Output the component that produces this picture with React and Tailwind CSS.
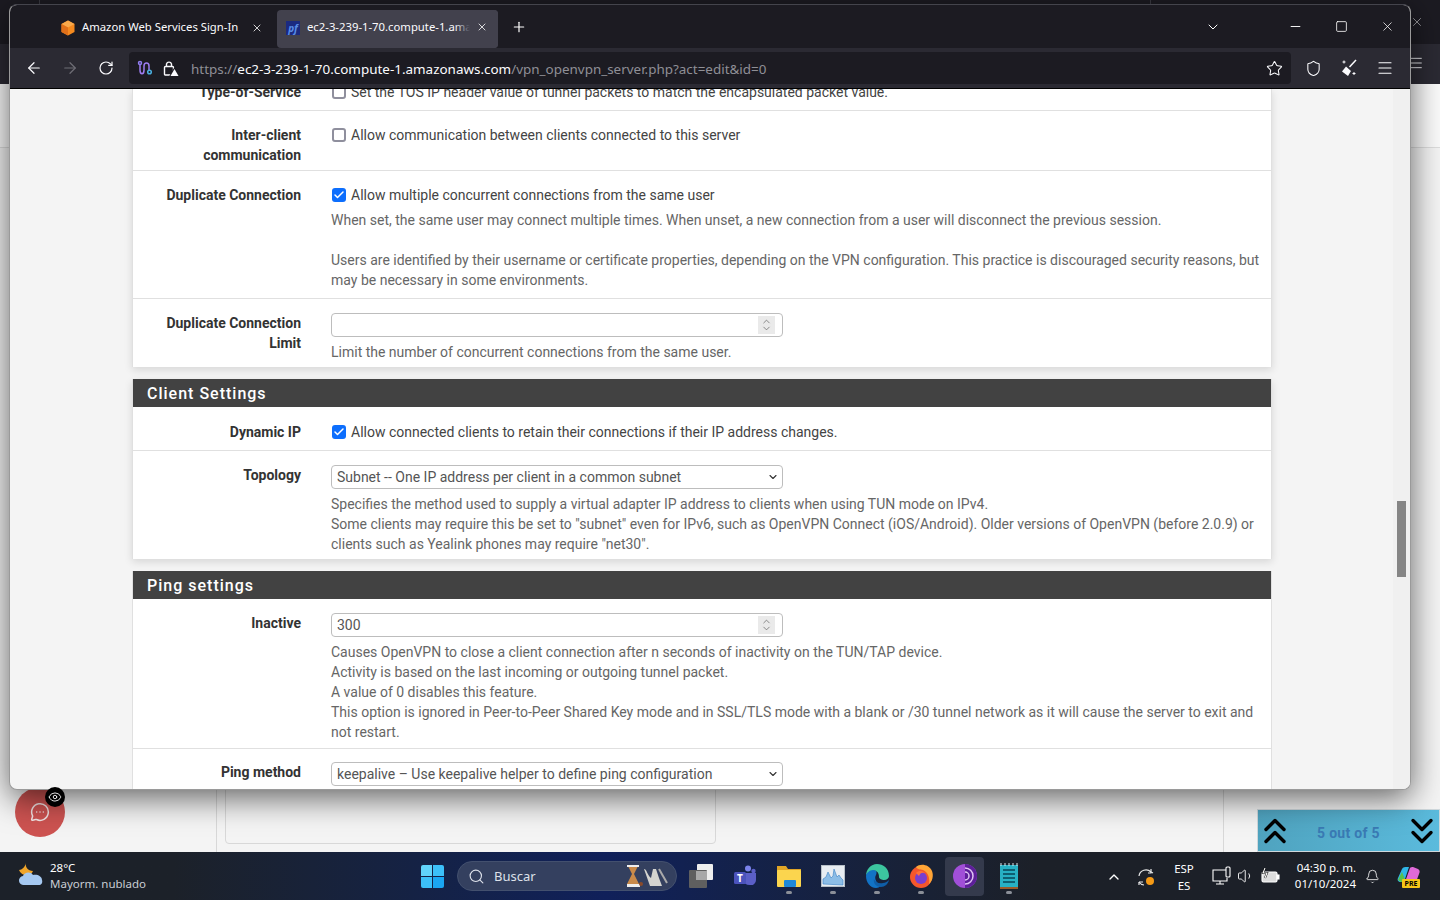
import React from "react";
import { X, Plus, ChevronDown, ArrowLeft, ArrowRight, RotateCw, Star, Shield, Menu, Minus, Square, Search, ChevronUp, Bell, Volume1, MessageCircleMore, Eye, Check } from "lucide-react";

const ui = "font-['Noto_Sans',sans-serif]";

function Cb({ on }) {
  return on ? (
    <span className="mt-[3px] ml-[1px] w-[14px] h-[14px] rounded-[3px] bg-[#0d6efd] flex items-center justify-center shrink-0">
      <Check size={12} color="#fff" strokeWidth={3} />
    </span>
  ) : (
    <span className="mt-[3px] ml-[1px] w-[14px] h-[14px] rounded-[3px] border-2 border-[#8f8f9d] bg-white shrink-0" />
  );
}

function Row({ label, children, cls = "" }) {
  return (
    <div className={`flex border-b border-[#e0e0e0] ${cls}`}>
      <div className="w-[168px] shrink-0 text-right font-bold text-[#333] text-[14px] leading-[20px]">{label}</div>
      <div className="flex-1 pl-[30px] pr-[10px] min-w-0">{children}</div>
    </div>
  );
}

function Help({ children }) {
  return <div className="text-[#666] text-[14px] leading-[20px]">{children}</div>;
}

function NumInput({ value }) {
  return (
    <div className="w-[452px] h-[24px] border border-[#bdbdbd] rounded-[4px] bg-white flex items-center pl-[5px] pr-[7px] text-[14px] text-[#555]">
      <span className="flex-1">{value}</span>
      <span className="w-[17px] h-[18px] bg-[#eaeaea] flex flex-col items-center justify-center text-[#666]">
        <ChevronUp size={11} strokeWidth={1.6} className="-mb-[2px]" />
        <ChevronDown size={11} strokeWidth={1.6} className="-mt-[2px]" />
      </span>
    </div>
  );
}

function Sel({ value }) {
  return (
    <div className="w-[452px] h-[24px] border border-[#bdbdbd] rounded-[4px] bg-white flex items-center pl-[5px] pr-[3px] text-[14px] text-[#555]">
      <span className="flex-1">{value}</span>
      <ChevronDown size={12} strokeWidth={2.2} className="text-[#333]" />
    </div>
  );
}

function Head({ children }) {
  return (
    <div className="h-[28px] pt-[2px] bg-[#424242] text-white text-[16px] font-medium tracking-[1px] flex items-center pl-[14px]">{children}</div>
  );
}

function Dot() {
  return <span className="absolute left-1/2 -translate-x-1/2 top-[37px] w-[6px] h-[3px] rounded-full bg-[#8b8f98]" />;
}

function TaskIcon({ children, dot, active }) {
  return (
    <div className="relative w-[44px] h-[44px] flex items-center justify-center">
      {active && <span className="absolute left-[2px] right-[3px] top-[3px] bottom-[2px] bg-[#343a4c] rounded-[4px]" />}
      <span className="relative flex items-center justify-center">{children}</span>
      {dot && <Dot />}
    </div>
  );
}

function Chevrons({ down }) {
  return (
    <svg width="24" height="26" viewBox="0 0 24 26" fill="none" stroke="#000" strokeWidth="3.4" strokeLinecap="round" strokeLinejoin="round" className={down ? "rotate-180" : ""}>
      <path d="M3 11.5 12 2.5l9 9" />
      <path d="M3 23.5 12 14.5l9 9" />
    </svg>
  );
}

function Browser() {
  return (
    <div className="absolute left-[9px] top-[4px] w-[1402px] h-[786px] rounded-[8px] overflow-hidden border border-[#9a9a9a] border-t-[#44444c] shadow-[0_8px_32px_rgba(0,0,0,0.6)] flex flex-col bg-[#f4f4f4]">
      {/* tab strip */}
      <div className={`h-[43px] bg-[#1c1b22] flex items-center shrink-0 text-white ${ui}`}>
        <div className="w-[267px] h-[38px] mt-[5px] flex items-center pl-[50px] shrink-0">
          <svg width="16" height="16" viewBox="0 0 16 16" className="shrink-0 mb-[3px]">
            <path d="M8 0.5 14.5 4v8L8 15.5 1.5 12V4z" fill="#f58a1f" />
            <path d="M8 0.5 14.5 4 8 7.5 1.5 4z" fill="#f9a94b" />
            <path d="M8 7.5v8L1.5 12V4z" fill="#e0701a" />
          </svg>
          <span className="ml-[6px] mb-[3px] text-[11.3px] whitespace-nowrap text-[#fbfbfe]">Amazon Web Services Sign-In</span>
          <X size={12} className="absolute left-[241px] mb-[3px]" strokeWidth={1.6} />
        </div>
        <div className="relative w-[221px] h-[38px] mt-[5px] rounded-[4px] bg-[#42414d] flex items-center pl-[9px] shrink-0">
          <span className="w-[14px] h-[14px] mb-[3px] bg-[#1b2a80] text-[#5a8fe8] text-[10px] italic font-bold leading-[14px] text-center shrink-0">pf</span>
          <span className="ml-[7px] mb-[3px] text-[11.3px] whitespace-nowrap w-[166px] overflow-hidden text-[#fbfbfe]">ec2-3-239-1-70.compute-1.amazonaws.com</span>
          <span className="absolute left-[178px] top-0 h-full w-[43px] rounded-r-[4px] bg-gradient-to-r from-[#42414d00] from-0% to-[#42414d] to-[35%]" />
          <X size={12} className="absolute right-[10px] top-[11px]" strokeWidth={1.6} />
        </div>
        <Plus size={16} className="ml-[13px]" strokeWidth={1.8} />
        <div className="flex-1" />
        <ChevronDown size={16} className="mr-[67px]" strokeWidth={1.5} />
        <Minus size={15} className="mr-[32px]" strokeWidth={1.5} />
        <Square size={13} className="mr-[32px]" strokeWidth={1.5} />
        <X size={15} className="mr-[15px]" strokeWidth={1.2} />
      </div>
      {/* toolbar */}
      <div className={`h-[41px] bg-[#2b2a33] flex items-center text-[#fbfbfe] shrink-0 border-b border-black ${ui}`}>
        <ArrowLeft size={18} className="ml-[15px]" strokeWidth={1.6} />
        <ArrowRight size={18} className="ml-[18px] text-[#6f6e76]" strokeWidth={1.6} />
        <RotateCw size={16} className="ml-[19px]" strokeWidth={1.8} />
        <div className="ml-[15px] w-[1162px] h-[32px] rounded-[4px] bg-[#1c1b22] flex items-center pl-[8px] pr-[8px]">
          <svg width="16" height="16" viewBox="0 0 16 16" fill="none" strokeWidth="1.5" className="shrink-0">
            <path d="M3 4v6c0 5 4 5 4 0V6c0-4 5-4 5 0v4" stroke="#9d7cf0" />
            <circle cx="3" cy="3" r="1.5" stroke="#8f7cf0" />
            <circle cx="12.5" cy="12" r="1.8" stroke="#4ab0e0" />
          </svg>
          <svg width="18" height="18" viewBox="0 0 18 18" fill="none" className="ml-[9px] shrink-0">
            <rect x="2.5" y="7.5" width="9" height="8.5" rx="1" stroke="#fbfbfe" strokeWidth="1.4" />
            <path d="M4.5 7.5V5a2.6 2.6 0 0 1 5 0v2.5" stroke="#fbfbfe" strokeWidth="1.4" />
            <path d="M12.5 8 18 17.5H7z" fill="#1c1b22" />
            <path d="M12.5 10 16.5 17h-8z" fill="#fbfbfe" />
          </svg>
          <span className="ml-[11px] mt-[2px] text-[13.44px] whitespace-nowrap text-[#8f8f96]">https://<span className="text-[#fbfbfe]">ec2-3-239-1-70.compute-1.amazonaws.com</span>/vpn_openvpn_server.php?act=edit&amp;id=0</span>
          <div className="flex-1" />
          <Star size={17} strokeWidth={1.5} />
        </div>
        <Shield size={17} className="ml-[14px]" strokeWidth={1.5} />
        <svg width="18" height="18" viewBox="0 0 18 18" className="ml-[18px]" fill="none">
          <path d="M16 1 9.5 8" stroke="#fbfbfe" strokeWidth="1.5" />
          <path d="M6 7.5l5 4.5-3 5-6-4.5z" fill="#fbfbfe" />
          <path d="M4 1.5v3M2.5 3h3M14 13v3M12.5 14.5h3" stroke="#fbfbfe" />
        </svg>
        <Menu size={18} className="ml-[18px]" strokeWidth={1.5} />
      </div>
      {/* page */}
      <div className="relative flex-1 min-h-0 overflow-hidden pl-[122px] font-['Roboto',sans-serif]">
        <div className="w-[1140px]">
          <div className="bg-white border-x border-[#e0e0e0] shadow-[0_3px_8px_rgba(0,0,0,0.12)]">
            <Row label={<div className="mt-[-7px]">Type-of-Service</div>} cls="h-[22px] overflow-hidden">
              <div className="flex gap-[5px] mt-[-7px] text-[#444] text-[14px] leading-[20px]"><Cb /><span>Set the TOS IP header value of tunnel packets to match the encapsulated packet value.</span></div>
            </Row>
            <Row label={<div className="pt-[14px]">Inter-client<br />communication</div>} cls="h-[60px]">
              <div className="flex gap-[5px] pt-[14px] text-[#444] text-[14px] leading-[20px]"><Cb /><span>Allow communication between clients connected to this server</span></div>
            </Row>
            <Row label={<div className="pt-[14px]">Duplicate Connection</div>} cls="h-[128px]">
              <div className="flex gap-[5px] pt-[14px] text-[#444] text-[14px] leading-[20px] mb-[5px]"><Cb on /><span>Allow multiple concurrent connections from the same user</span></div>
              <Help>When set, the same user may connect multiple times. When unset, a new connection from a user will disconnect the previous session.<br /><br /></Help>
              <Help>Users are identified by their username or certificate properties, depending on the VPN configuration. This practice is discouraged security reasons, but may be necessary in some environments.</Help>
            </Row>
            <Row label={<div className="pt-[14px]">Duplicate Connection<br />Limit</div>} cls="h-[68px] border-b-0">
              <div className="pt-[14px]"><NumInput /></div>
              <div className="mt-[5px]"><Help>Limit the number of concurrent connections from the same user.</Help></div>
            </Row>
          </div>

          <div className="mt-[12px] bg-white border-x border-[#e0e0e0] shadow-[0_3px_8px_rgba(0,0,0,0.12)]">
            <Head>Client Settings</Head>
            <Row label={<div className="pt-[15px]">Dynamic IP</div>} cls="h-[44px]">
              <div className="flex gap-[5px] pt-[15px] text-[#444] text-[14px] leading-[20px]"><Cb on /><span>Allow connected clients to retain their connections if their IP address changes.</span></div>
            </Row>
            <Row label={<div className="pt-[14px]">Topology</div>} cls="h-[108px] border-b-0">
              <div className="pt-[14px]"><Sel value="Subnet -- One IP address per client in a common subnet" /></div>
              <div className="mt-[5px]">
                <Help>Specifies the method used to supply a virtual adapter IP address to clients when using TUN mode on IPv4.<br />Some clients may require this be set to "subnet" even for IPv6, such as OpenVPN Connect (iOS/Android). Older versions of OpenVPN (before 2.0.9) or clients such as Yealink phones may require "net30".</Help>
              </div>
            </Row>
          </div>

          <div className="mt-[12px] bg-white border-x border-[#e0e0e0]">
            <Head>Ping settings</Head>
            <Row label={<div className="pt-[14px]">Inactive</div>} cls="h-[150px]">
              <div className="pt-[14px]"><NumInput value="300" /></div>
              <div className="mt-[5px]">
                <Help>Causes OpenVPN to close a client connection after n seconds of inactivity on the TUN/TAP device.<br />Activity is based on the last incoming or outgoing tunnel packet.<br />A value of 0 disables this feature.<br />This option is ignored in Peer-to-Peer Shared Key mode and in SSL/TLS mode with a blank or /30 tunnel network as it will cause the server to exit and not restart.</Help>
              </div>
            </Row>
            <Row label={<div className="pt-[13px]">Ping method</div>} cls="h-[60px] border-b-0">
              <div className="pt-[13px]"><Sel value="keepalive – Use keepalive helper to define ping configuration" /></div>
            </Row>
          </div>
        </div>
        {/* scrollbar */}
        <div className="absolute right-0 top-0 bottom-0 w-[17px] bg-[#f0f0f0]">
          <div className="absolute left-[4px] top-[412px] w-[9px] h-[76px] bg-[#858585]" />
        </div>
      </div>
    </div>
  );
}

function BackDesktop() {
  return (
    <>
      <div className="absolute inset-x-0 top-0 h-[44px] bg-[#1c1b22]" />
      <div className="absolute left-[39px] top-0 w-px h-[44px] bg-[#3a3a42]" />
      <div className="absolute left-[1150px] top-0 w-px h-[44px] bg-[#3a3a42]" />
      <div className="absolute inset-x-0 top-[44px] h-[40px] bg-[#2b2a33]" />
      <X size={14} className="absolute left-[1410px] top-[15px] text-[#c8c8cc]" strokeWidth={1.2} />
      <Menu size={16} className="absolute left-[1408px] top-[55px] text-[#e6e6ea]" strokeWidth={1.5} />
      <div className="absolute left-0 right-0 top-[84px] h-[64px] bg-[#fafafa] border-b border-[#dddddd]" />
      <div className="absolute left-[216px] top-[789px] h-[64px] w-px bg-[#d8d8d8]" />
      <div className="absolute left-[1223px] top-[789px] h-[64px] w-px bg-[#d8d8d8]" />
      <div className="absolute left-[225px] top-[780px] w-[491px] h-[64px] rounded-[4px] border border-[#d8d8d8]" />
    </>
  );
}

function Taskbar() {
  return (
    <div className={`absolute inset-x-0 bottom-0 h-[48px] bg-gradient-to-r from-[#1c2129] from-[12%] via-[#10205a] via-[42%] to-[#1c2028] to-[72%] flex items-center text-white ${ui}`}>
      {/* weather */}
      <svg width="28" height="28" viewBox="0 0 28 28" className="absolute left-[17px] top-[9px]">
        <path d="M9 2c-1 4 2 8 7 8-1 3-4 4-7 4-4 0-6-3-7-5 3 0 6-3 7-7z" fill="#f0a52a" />
        <path d="M7 24a4.5 4.5 0 0 1-1-9c1-4 8-5 10-1 4-1 9 1 9 5 1 3-1 5-3 5z" fill="#a5c8f0" />
      </svg>
      <div className="absolute left-[50px] top-[8px] text-[11.5px] leading-[16px] whitespace-nowrap">
        <div>28°C</div>
        <div className="text-[#c9cdd4]">Mayorm. nublado</div>
      </div>

      {/* center */}
      <div className="absolute left-[421px] top-[13px] grid grid-cols-2 gap-[1px] w-[23px] h-[23px]">
        <span className="bg-[#61d4fb] rounded-tl-[2px]" /><span className="bg-[#3cc0f8] rounded-tr-[2px]" />
        <span className="bg-[#3cc0f8] rounded-bl-[2px]" /><span className="bg-[#1aa6f2] rounded-br-[2px]" />
      </div>
      <div className="absolute left-[457px] top-[9px] w-[220px] h-[30px] rounded-full bg-[#34405f] border border-[#43506e] flex items-center pl-[10px] text-[#dde1ea] text-[13px]">
        <Search size={17} strokeWidth={1.6} />
        <span className="ml-[9px] mt-[1px]">Buscar</span>
        <svg width="44" height="26" viewBox="0 0 44 26" className="absolute left-[168px] top-[1px]">
          <path d="M2 3h10l-4 8 5 10H1l5-10z" fill="#c98a4a" />
          <path d="M1 2h12v2H1zM1 21h13v3H1z" fill="#eee" />
          <circle cx="15" cy="21" r="2" fill="#8a4a2a" />
          <path d="M18 6c3 0 3 6 7 9l2-9h3l3 9 3 8H24z" fill="#d4d4d0" />
          <path d="M33 6l8 14" stroke="#aaa" strokeWidth="2" />
        </svg>
      </div>
      <div className="absolute left-[679px] top-[2px] flex items-center">
        <TaskIcon>
          <span className="relative block w-[24px] h-[24px]">
            <span className="absolute right-0 top-0 w-[16px] h-[16px] bg-[#eeeeee] rounded-[1px]" />
            <span className="absolute left-0 bottom-0 w-[18px] h-[18px] bg-[#5f5f5f] rounded-[1px]" />
            <span className="absolute left-[7px] top-[7px] w-[11px] h-[9px] bg-[#a8a8a8]" />
          </span>
        </TaskIcon>
        <TaskIcon>
          <svg width="24" height="24" viewBox="0 0 24 24">
            <circle cx="15" cy="4.5" r="3" fill="#7b83eb" />
            <circle cx="20.5" cy="7" r="2.2" fill="#5b5fc7" />
            <path d="M10 9h13v7a5 5 0 0 1-6 5 7 7 0 0 1-7-5z" fill="#5b5fc7" />
            <rect x="1" y="8" width="12" height="12" rx="1.5" fill="#4b53bc" />
            <text x="7" y="17.5" textAnchor="middle" fontSize="10" fontWeight="700" fill="#fff">T</text>
          </svg>
        </TaskIcon>
        <TaskIcon dot>
          <svg width="26" height="26" viewBox="0 0 26 26">
            <path d="M1 3h9l2 3h13v2H1z" fill="#e0a526" />
            <rect x="1" y="7" width="24" height="17" rx="1" fill="#fbd54e" />
            <rect x="8" y="17" width="12" height="7" rx="1" fill="#1e88d8" />
          </svg>
        </TaskIcon>
        <TaskIcon dot>
          <svg width="24" height="22" viewBox="0 0 24 22">
            <rect x="0.5" y="0.5" width="23" height="21" fill="#e8edf2" stroke="#b7c0c8" />
            <path d="M2 19V14l3-2 2-5 3 6 2-2 1-7 3 8 2-2 2 3 2 2v5z" fill="#8cbde6" stroke="#3b82c4" strokeWidth=".6" />
          </svg>
        </TaskIcon>
        <TaskIcon dot>
          <svg width="26" height="26" viewBox="0 0 26 26">
            <path d="M2 13C2 6 7 1 13 1s12 4 12 12c0 2-2 4-5 4-2 0-5-1-5-3 0-5-3-7-6-6s-7 3-7 5z" fill="#3cc69f" />
            <path d="M2 13c0-3 4-6 7-6 4 0 4 3 3 5-2 3 0 8 5 11-2 1-3 2-5 2C6 25 2 19 2 13z" fill="#1273c5" />
            <path d="M25 17c-1 4-4 7-8 7-5 0-8-4-7-8 1 3 5 5 9 4 2 0 4-1 6-3z" fill="#0f5ea8" />
          </svg>
        </TaskIcon>
        <TaskIcon dot>
          <svg width="26" height="26" viewBox="0 0 26 26">
            <circle cx="13" cy="14" r="11" fill="#f5572c" />
            <path d="M8 4c4-4 13-3 16 4 2 5 0 11-3 13 1-6-1-12-6-14-3-1-5 0-7-3z" fill="#ffa436" />
            <circle cx="13" cy="15" r="6" fill="#7a3fd0" />
            <path d="M8 10c3-3 7-2 9 0-3-1-5 0-6 3z" fill="#ff7139" />
          </svg>
        </TaskIcon>
        <TaskIcon active>
          <svg width="26" height="26" viewBox="0 0 26 26">
            <circle cx="13" cy="13" r="12" fill="#a14fd8" />
            <path d="M13 1a12 12 0 0 1 0 24z" fill="#5d1f9a" />
            <path d="M13 5a8 8 0 0 1 0 16M13 9a4 4 0 0 1 0 8" stroke="#e0c3f5" strokeWidth="1.5" fill="none" />
          </svg>
          <span className="absolute left-1/2 -translate-x-1/2 top-[37px] w-[16px] h-[3px] rounded-full bg-[#4cc2ff]" />
        </TaskIcon>
        <TaskIcon dot>
          <svg width="20" height="26" viewBox="0 0 20 26">
            <rect x="1" y="2" width="18" height="22" fill="#27b0c4" />
            <rect x="1" y="24" width="18" height="2" fill="#9a5a2a" />
            <path d="M2 0v3M6 0v3M10 0v3M14 0v3M18 0v3" stroke="#d8e8ee" />
            <path d="M4 7h12M4 11h12M4 15h12M4 19h12" stroke="#0e5f72" strokeWidth="2" />
          </svg>
        </TaskIcon>
      </div>

      {/* tray */}
      <ChevronUp size={16} className="absolute left-[1106px] top-[17px]" strokeWidth={2} />
      <svg width="20" height="20" viewBox="0 0 20 20" fill="none" stroke="#e8e8e8" strokeWidth="1.2" className="absolute left-[1136px] top-[15px]">
        <path d="M3 9a7 7 0 0 1 12-4l2 1" />
        <path d="M15 2v4h-3" />
        <path d="M3 15h4M3 15v3" />
        <path d="M3 15a7 7 0 0 0 5 3" />
        <circle cx="14" cy="14" r="4" fill="#f59a16" stroke="none" />
      </svg>
      <div className="absolute left-[1164px] w-[40px] top-[8px] text-center text-[11.5px] leading-[17px]">ESP<br />ES</div>
      <svg width="20" height="20" viewBox="0 0 20 20" fill="none" stroke="#fff" strokeWidth="1.1" className="absolute left-[1212px] top-[14px]">
        <path d="M14 4H1v11h14v-3" />
        <path d="M8 15v3M4 18h8" />
        <rect x="14" y="1" width="4" height="10" rx="1" />
      </svg>
      <Volume1 size={18} strokeWidth={1.2} className="absolute left-[1237px] top-[15px]" />
      <svg width="20" height="16" viewBox="0 0 20 16" className="absolute left-[1261px] top-[16px]" fill="none" stroke="#fff" strokeWidth="1.1">
        <rect x="1" y="4" width="15" height="10" rx="1.5" fill="#ddd" />
        <rect x="16" y="7" width="2" height="4" fill="#fff" />
        <path d="M4 0 2 5h4l-2 5" stroke="#000" strokeWidth="2" />
        <path d="M4 0 2 5h4l-2 5" />
      </svg>
      <div className="absolute left-[1283px] w-[73px] top-[8px] text-right text-[11.5px] leading-[16px] whitespace-nowrap">04:30 p. m.<br />01/10/2024</div>
      <Bell size={15} strokeWidth={1.3} className="absolute left-[1365px] top-[17px]" />
      <div className="absolute left-[1396px] top-[14px] w-[23px] h-[22px]">
        <svg width="24" height="18" viewBox="0 0 24 18">
          <path d="M2 12 6 3c1-2 3-2 5-2h2L8 16H5c-3 0-4-2-3-4z" fill="#2fb6e8" />
          <path d="M9 16l5-14c.5-1 2-1 3-1l5 2c2 1 2 3 1 5l-3 8z" fill="#e06ad8" />
          <path d="M2 14 6 6l4 10H5z" fill="#58c04a" />
        </svg>
        <span className="absolute left-[6px] top-[13px] w-[18px] h-[9px] bg-[#f5c518] rounded-[1px] text-[7px] leading-[9px] font-bold text-black text-center">PRE</span>
      </div>
    </div>
  );
}

export default function App() {
  return (
    <div className="relative w-[1440px] h-[900px] overflow-hidden bg-[#f4f4f4] font-['Roboto',sans-serif]">
      <BackDesktop />
      {/* chat bubble */}
      <div className="absolute left-[15px] top-[787px] w-[50px] h-[50px] rounded-full bg-[#cd5351] flex items-center justify-center text-[#f2e4e4]">
        <MessageCircleMore size={20} strokeWidth={1.8} />
      </div>
      <div className="absolute left-[45px] top-[787px] w-[20px] h-[20px] rounded-full bg-black flex items-center justify-center text-white z-20">
        <Eye size={14} strokeWidth={1.5} />
      </div>
      {/* pager */}
      <div className="absolute left-[1257px] top-[809px] w-[183px] h-[43px] bg-gradient-to-r from-[#4fa3bf] to-[#5bbbdd] border border-[#cfd8dc] text-[#3a7ab4] font-bold text-[14px] flex items-center justify-between pl-[5px] pr-[5px]">
        <Chevrons />
        <span className="tracking-[0.3px] mt-[6px]">5 out of 5</span>
        <Chevrons down />
      </div>
      <Browser />
      <Taskbar />
    </div>
  );
}
